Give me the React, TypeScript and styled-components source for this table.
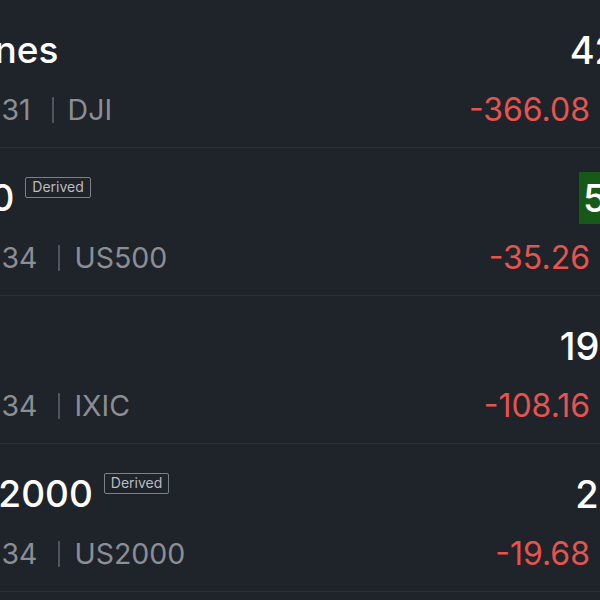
import React from "react";
import styled, { createGlobalStyle } from "styled-components";

const GlobalStyle = createGlobalStyle`
  html, body {
    margin: 0;
    padding: 0;
    background: #1f232a;
    overflow: hidden;
  }
  body {
    font-family: Inter, "Noto Sans", sans-serif;
    -webkit-font-smoothing: antialiased;
  }
`;

const Viewport = styled.div`
  width: 600px;
  height: 600px;
  overflow: hidden;
  background: #1f232a;
`;

const List = styled.div`
  width: 875px;
  margin-left: -138px;
  border-top: 1px solid #2a2e36;
  margin-top: -1px;
`;

const Row = styled.div`
  display: flex;
  justify-content: space-between;
  box-sizing: border-box;
  height: 148px;
  padding: 24px 0 0;
  border-bottom: 1px solid #2a2e36;
`;

const Left = styled.div`
  display: flex;
  flex-direction: column;
  gap: 16px;
`;

const TitleLine = styled.div`
  display: flex;
  align-items: flex-start;
  gap: 11px;
  height: 52px;
`;

const Title = styled.span`
  color: #ffffff;
  font-size: 37px;
  line-height: 52px;
  font-weight: 500;
  white-space: nowrap;
`;

const Badge = styled.span`
  margin-top: 5px;
  box-sizing: border-box;
  height: 21px;
  padding: 0 6px;
  border: 1.5px solid #7c8087;
  border-radius: 2px;
  color: #b8bbc0;
  font-size: 14px;
  line-height: 18px;
  font-weight: 400;
`;

const Sub = styled.div`
  display: flex;
  align-items: center;
  height: 36px;
  color: #8b8e94;
  font-size: 28.5px;
  line-height: 36px;
  white-space: nowrap;
`;

const Pipe = styled.span`
  display: inline-block;
  width: 2px;
  height: 26px;
  margin: 0 14px 0 21px;
  background: #50545b;
`;

const Right = styled.div`
  display: flex;
  flex-direction: column;
  align-items: flex-end;
  gap: 16px;
`;

const Price = styled.span<{ $flash?: boolean }>`
  color: #ffffff;
  font-size: 38px;
  line-height: 52px;
  font-weight: 500;
  padding: 0 4px;
  background: ${(p) => (p.$flash ? "#175a17" : "transparent")};
  white-space: nowrap;
`;

const ChangeLine = styled.div`
  display: flex;
  align-items: center;
  height: 36px;
  color: #e6544d;
  font-size: 32px;
  line-height: 36px;
  white-space: nowrap;
`;

const Pct = styled.span`
  width: 123px;
  margin-left: 24px;
  text-align: right;
`;

type Quote = {
  name: string;
  derived?: boolean;
  time: string;
  code: string;
  price: string;
  flash?: boolean;
  change: string;
  pct: string;
};

const quotes: Quote[] = [
  { name: "Dow Jones", time: "Closed 16:31", code: "DJI", price: "42,326.8", change: "-366.08", pct: "-0.86%" },
  { name: "S&P 500", derived: true, time: "Closed 16:34", code: "US500", price: "5,872.16", flash: true, change: "-35.26", pct: "-0.60%" },
  { name: "Nasdaq", time: "Closed 16:34", code: "IXIC", price: "19,372.77", change: "-108.16", pct: "-0.55%" },
  { name: "Russell 2000", derived: true, time: "Closed 16:34", code: "US2000", price: "2,231.42", change: "-19.68", pct: "-0.87%" },
];

export default function App() {
  return (
    <Viewport>
      <GlobalStyle />
      <List>
        {quotes.map((q) => (
          <Row key={q.code}>
            <Left>
              <TitleLine>
                <Title>{q.name}</Title>
                {q.derived && <Badge>Derived</Badge>}
              </TitleLine>
              <Sub>
                {q.time}
                <Pipe />
                {q.code}
              </Sub>
            </Left>
            <Right>
              <Price $flash={q.flash}>{q.price}</Price>
              <ChangeLine>
                {q.change}
                <Pct>{q.pct}</Pct>
              </ChangeLine>
            </Right>
          </Row>
        ))}
      </List>
    </Viewport>
  );
}
